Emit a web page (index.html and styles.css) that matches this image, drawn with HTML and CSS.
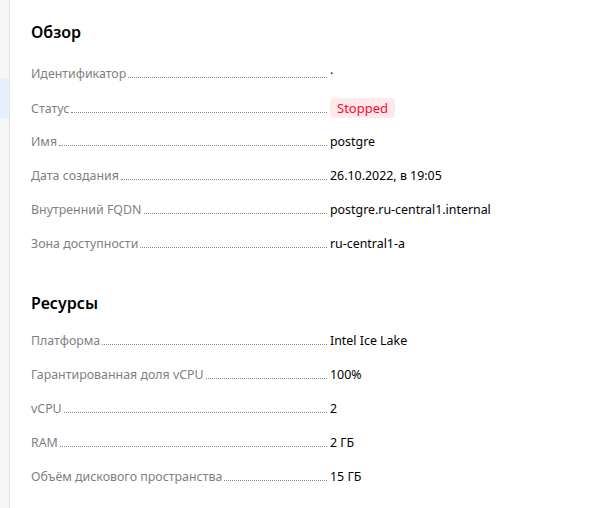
FILE: index.html
```html
<!DOCTYPE html>
<html lang="ru">
<head>
<meta charset="utf-8">
<link rel="stylesheet" href="styles.css">
</head>
<body>
<div class="layout">
  <aside class="sidebar">
    <div class="side-item"></div>
    <div class="side-item active"></div>
  </aside>
  <main class="main">
    <section class="section">
      <h2 class="title">Обзор</h2>
      <dl class="props">
        <div class="row"><dt class="label"><span>Идентификатор</span><i class="dots"></i></dt><dd class="value">·</dd></div>
        <div class="row"><dt class="label"><span>Статус</span><i class="dots"></i></dt><dd class="value"><span class="badge">Stopped</span></dd></div>
        <div class="row"><dt class="label"><span>Имя</span><i class="dots"></i></dt><dd class="value">postgre</dd></div>
        <div class="row"><dt class="label"><span>Дата создания</span><i class="dots"></i></dt><dd class="value">26.10.2022, в 19:05</dd></div>
        <div class="row"><dt class="label"><span>Внутренний FQDN</span><i class="dots"></i></dt><dd class="value">postgre.ru-central1.internal</dd></div>
        <div class="row"><dt class="label"><span>Зона доступности</span><i class="dots"></i></dt><dd class="value">ru-central1-a</dd></div>
      </dl>
    </section>
    <section class="section second">
      <h2 class="title">Ресурсы</h2>
      <dl class="props">
        <div class="row"><dt class="label"><span>Платформа</span><i class="dots"></i></dt><dd class="value">Intel Ice Lake</dd></div>
        <div class="row"><dt class="label"><span>Гарантированная доля vCPU</span><i class="dots"></i></dt><dd class="value">100%</dd></div>
        <div class="row"><dt class="label"><span>vCPU</span><i class="dots"></i></dt><dd class="value">2</dd></div>
        <div class="row"><dt class="label"><span>RAM</span><i class="dots"></i></dt><dd class="value">2 ГБ</dd></div>
        <div class="row"><dt class="label"><span>Объём дискового пространства</span><i class="dots"></i></dt><dd class="value">15 ГБ</dd></div>
      </dl>
    </section>
  </main>
</div>
</body>
</html>
```
FILE: styles.css
```css
html, body {
  margin: 0;
  padding: 0;
  background: #fff;
}
body {
  font-family: "Noto Sans", "Open Sans", sans-serif;
  font-size: 12.4px;
  color: #000;
}
.layout {
  display: flex;
  min-height: 508px;
}
.sidebar {
  width: 9px;
  flex: none;
  background: #f7f7f7;
  border-right: 1px solid #e4e4e4;
  padding-top: 78px;
}
.side-item { height: 0; }
.side-item.active {
  height: 40px;
  background: #e6effc;
}
.main {
  flex: 1;
  padding: 20px 0 0 21px;
}
.title {
  margin: 0;
  font-size: 16px;
  font-weight: 600;
  line-height: 24px;
  color: #000;
}
.section.second { margin-top: 37px; }
.props {
  margin: 20px 0 0;
  display: flex;
  flex-direction: column;
  gap: 14px;
}
.second .props { margin-top: 16px; }
.row {
  display: grid;
  grid-template-columns: 299px 1fr;
  height: 20px;
  align-items: center;
}
.label {
  display: flex;
  align-items: baseline;
  color: #7f7f7f;
  line-height: 20px;
}
.dots {
  flex: 1;
  margin: 0 3px 0 2px;
  border-bottom: 1px dotted #8a8a8a;
}
.value {
  margin: 0;
  line-height: 20px;
}
.badge {
  display: inline-block;
  padding: 0 7px;
  height: 20px;
  line-height: 20px;
  border-radius: 4px;
  background: #ffe9ea;
  color: #ff0432;
  font-size: 13px;
}
```
